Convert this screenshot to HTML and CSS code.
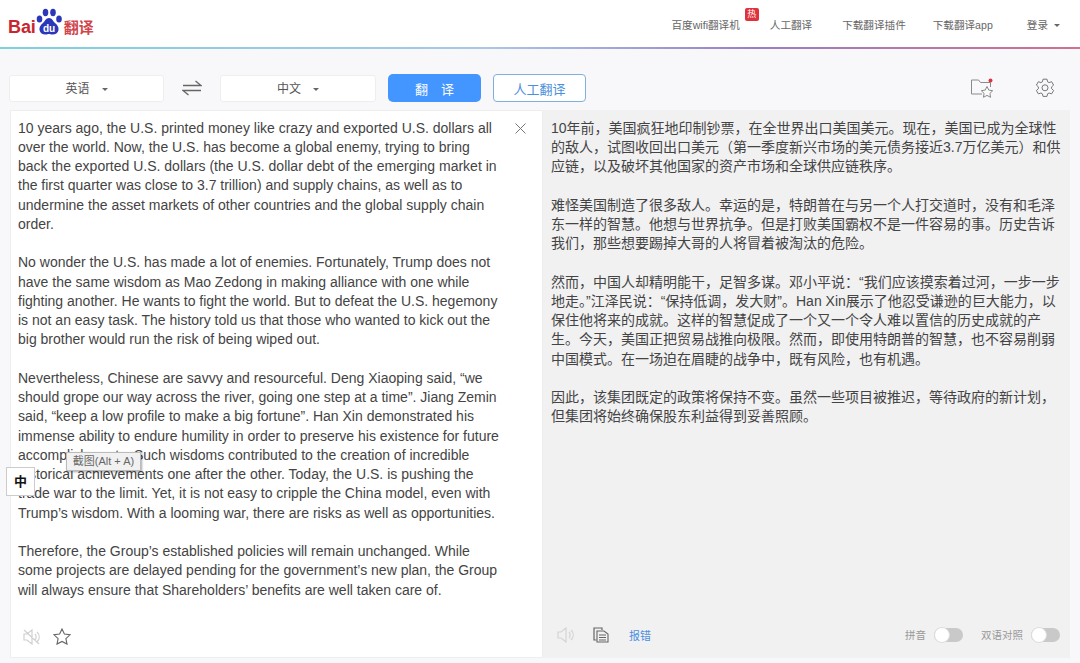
FILE: index.html
```html
<!DOCTYPE html>
<html lang="zh">
<head>
<meta charset="utf-8">
<title>百度翻译</title>
<link rel="stylesheet" href="styles.css">
</head>
<body>
<header class="topbar">
  <a class="logo">
    <span class="logo-bai">Bai</span>
    <svg class="paw" width="26" height="28" viewBox="0 0 26 28"><g fill="#2b37b8"><ellipse cx="3.5" cy="11" rx="2.8" ry="3.6"/><ellipse cx="9.5" cy="4.5" rx="2.8" ry="3.7"/><ellipse cx="17" cy="4.5" rx="2.8" ry="3.7"/><ellipse cx="23" cy="11" rx="2.8" ry="3.6"/><path d="M13 10c-3 0-4 3-6 5-2 1.500-4 4-3.500 7 .5 3 3 4.500 6 4.500 1.500 0 2.500-.5 3.500-.5s2 .5 3.500.5c3 0 5.500-1.500 6-4.500.5-3-1.500-5.500-3.500-7-2-2-3-5-6-5z"/></g><text x="13" y="23.500" class="paw-text" text-anchor="middle">du</text></svg>
    <span class="logo-cn">翻译</span>
  </a>
  <nav class="nav">
    <a class="nav-item nav-hot">百度wifi翻译机<span class="hot">热</span></a>
    <a class="nav-item">人工翻译</a>
    <a class="nav-item">下载翻译插件</a>
    <a class="nav-item">下载翻译app</a>
    <a class="nav-item nav-login">登录<i class="caret"></i></a>
  </nav>
</header>
<div class="rule"></div>
<section class="toolbar">
  <div class="select select-from">英语<i class="caret"></i></div>
  <svg class="swap" width="20" height="16" viewBox="0 0 20 16"><path d="M1 5.500h18L13.500 1M19 10.500H1L6.500 15" fill="none" stroke="#666" stroke-width="1.300"/></svg>
  <div class="select select-to">中文<i class="caret"></i></div>
  <button class="btn-primary">翻　译</button>
  <button class="btn-outline">人工翻译</button>
  <div class="tools">
    <span class="fav">
      <svg width="24" height="20" viewBox="0 0 24 20"><path d="M12 16H1.500V2h7l2 2.500h10V9" fill="none" stroke="#8a8a8a" stroke-width="1"/><path d="M17 8.500l1.800 3.600 3.900.6-2.800 2.700.7 3.900-3.600-1.900-3.600 1.900.7-3.900-2.800-2.700 3.900-.6z" fill="#fafafa" stroke="#8a8a8a" stroke-width="1"/><circle cx="20.500" cy="2.500" r="2" fill="#d9363e"/></svg>
    </span>
    <svg class="gear" width="20" height="20" viewBox="0 0 20 20"><path d="M8 1.200h4l.6 2.600 1.500.8 2.500-.9 2 3.400-2 1.800v1.800l2 1.800-2 3.400-2.500-.9-1.500.8-.6 2.600H8l-.6-2.600-1.500-.8-2.500.9-2-3.400 2-1.800V8.900l-2-1.800 2-3.400 2.500.9 1.500-.8z" fill="none" stroke="#777" stroke-width="1"/><circle cx="10" cy="9.800" r="3" fill="none" stroke="#777" stroke-width="1"/></svg>
  </div>
</section>
<main class="panels">
  <section class="panel panel-src">
    <svg class="close" width="11" height="11" viewBox="0 0 11 11"><path d="M.5.500l10 10M10.500.500l-10 10" stroke="#777" stroke-width="1"/></svg>
    <div class="src-text">
      <p>10 years ago, the U.S. printed money like crazy and exported U.S. dollars all<br>over the world. Now, the U.S. has become a global enemy, trying to bring<br>back the exported U.S. dollars (the U.S. dollar debt of the emerging market in<br>the first quarter was close to 3.7 trillion) and supply chains, as well as to<br>undermine the asset markets of other countries and the global supply chain<br>order.</p>
      <p>No wonder the U.S. has made a lot of enemies. Fortunately, Trump does not<br>have the same wisdom as Mao Zedong in making alliance with one while<br>fighting another. He wants to fight the world. But to defeat the U.S. hegemony<br>is not an easy task. The history told us that those who wanted to kick out the<br>big brother would run the risk of being wiped out.</p>
      <p>Nevertheless, Chinese are savvy and resourceful. Deng Xiaoping said, “we<br>should grope our way across the river, going one step at a time”. Jiang Zemin<br>said, “keep a low profile to make a big fortune”. Han Xin demonstrated his<br>immense ability to endure humility in order to preserve his existence for future<br>accomplishments. Such wisdoms contributed to the creation of incredible<br>historical achievements one after the other. Today, the U.S. is pushing the<br>trade war to the limit. Yet, it is not easy to cripple the China model, even with<br>Trump’s wisdom. With a looming war, there are risks as well as opportunities.</p>
      <p>Therefore, the Group’s established policies will remain unchanged. While<br>some projects are delayed pending for the government’s new plan, the Group<br>will always ensure that Shareholders’ benefits are well taken care of.</p>
    </div>
    <div class="panel-foot">
      <svg width="18" height="16" viewBox="0 0 18 16"><path d="M1 5h3l5-4v14l-5-4H1zM12 5c1.500 1.500 1.500 4.500 0 6M14 3c3 3 3 7 0 10M1 1l15 14" fill="none" stroke="#d0d0d0" stroke-width="1.200"/></svg>
      <svg class="star" width="18" height="17" viewBox="0 0 18 17"><path d="M9 1l2.400 5.100 5.600.7-4.100 3.800 1.100 5.500L9 13.400l-5 2.700 1.100-5.500L1 6.800l5.600-.7z" fill="none" stroke="#666" stroke-width="1.100"/></svg>
    </div>
  </section>
  <section class="panel panel-dst">
    <div class="dst-text">
      <p>10年前，美国疯狂地印制钞票，在全世界出口美国美元。现在，美国已成为全球性<br>的敌人，试图收回出口美元（第一季度新兴市场的美元债务接近3.7万亿美元）和供<br>应链，以及破坏其他国家的资产市场和全球供应链秩序。</p>
      <p>难怪美国制造了很多敌人。幸运的是，特朗普在与另一个人打交道时，没有和毛泽<br>东一样的智慧。他想与世界抗争。但是打败美国霸权不是一件容易的事。历史告诉<br>我们，那些想要踢掉大哥的人将冒着被淘汰的危险。</p>
      <p>然而，中国人却精明能干，足智多谋。邓小平说：“我们应该摸索着过河，一步一步<br>地走。”江泽民说：“保持低调，发大财”。Han Xin展示了他忍受谦逊的巨大能力，以<br>保住他将来的成就。这样的智慧促成了一个又一个令人难以置信的历史成就的产<br>生。今天，美国正把贸易战推向极限。然而，即使用特朗普的智慧，也不容易削弱<br>中国模式。在一场迫在眉睫的战争中，既有风险，也有机遇。</p>
      <p>因此，该集团既定的政策将保持不变。虽然一些项目被推迟，等待政府的新计划，<br>但集团将始终确保股东利益得到妥善照顾。</p>
    </div>
    <div class="panel-foot dst-foot">
      <svg width="18" height="16" viewBox="0 0 18 16"><path d="M1 5h3l5-4v14l-5-4H1zM12 5c1.500 1.500 1.500 4.500 0 6M14 3c3 3 3 7 0 10" fill="none" stroke="#d4d4d4" stroke-width="1.200"/></svg>
      <svg class="copy" width="16" height="16" viewBox="0 0 16 16"><path d="M3.500 13H1V1h8v2" fill="none" stroke="#666" stroke-width="1.200"/><path d="M4 4h7l4 3v8H4zM6 8h7M6 10.500h7M6 13h7" fill="none" stroke="#666" stroke-width="1.100"/></svg>
      <a class="report">报错</a>
      <span class="toggle-group">
        <span class="toggle-label">拼音</span><span class="toggle"><i></i></span>
        <span class="toggle-label label-gap">双语对照</span><span class="toggle"><i></i></span>
      </span>
    </div>
  </section>
</main>
<div class="shot-tip">截图(Alt + A)</div>
<div class="ime">中</div>
</body>
</html>
```
FILE: styles.css
```css
* { box-sizing: border-box; }
html, body { margin: 0; padding: 0; }
body {
  width: 1080px;
  height: 663px;
  overflow: hidden;
  background: #f8f8fa;
  font-family: "Liberation Sans", "Noto Sans CJK SC", sans-serif;
  color: #333;
  position: relative;
}
p { margin: 0; }
.topbar {
  height: 47px;
  background: #fff;
  display: flex;
  justify-content: space-between;
  align-items: flex-start;
}
.logo {
  display: flex;
  align-items: flex-start;
  margin-left: 8px;
  padding-top: 8px;
}
.logo-bai {
  font-size: 18px;
  font-weight: 700;
  color: #c9252f;
  line-height: 19px;
  margin-top: 10px;
  letter-spacing: -0.1px;
}
.paw { margin-left: 0; }
.paw-text { font: 700 10px "Liberation Sans", sans-serif; fill: #fff; }
.logo-cn {
  font-size: 15px;
  font-weight: 700;
  color: #d0454c;
  line-height: 19px;
  margin: 10px 0 0 2px;
}
.nav {
  display: flex;
  font-size: 10.600px;
  color: #666;
  padding-top: 18px;
  line-height: 15px;
}
.nav-item { position: relative; white-space: nowrap; }
.nav-hot { margin-right: 30px; }
.nav-item:nth-child(2) { margin-right: 30px; }
.nav-item:nth-child(3) { margin-right: 27px; }
.nav-item:nth-child(4) { margin-right: 34px; }
.nav-login { margin-right: 20px; }
.hot {
  position: absolute;
  right: -19px;
  top: -10px;
  width: 14px;
  height: 13px;
  background: #e0323c;
  color: #fff;
  font-size: 9px;
  line-height: 13px;
  text-align: center;
  border-radius: 2px;
}
.caret {
  display: inline-block;
  width: 0;
  height: 0;
  margin-left: 6px;
  vertical-align: 2px;
  border: 3px solid transparent;
  border-top: 3.500px solid #666;
  border-bottom: 0;
}
.rule {
  height: 1.500px;
  background: linear-gradient(90deg, #7fd0de 0%, #a9c7e8 45%, #9a7fc4 70%, #d2708f 100%);
}
.toolbar {
  display: flex;
  align-items: center;
  height: 27px;
  margin: 26px 10px 0 9px;
}
.select {
  height: 27px;
  flex: none;
  background: #fff;
  border: 1px solid #eeeeef;
  border-radius: 3px;
  font-size: 12px;
  color: #555;
  line-height: 26px;
  text-align: center;
}
.select .caret { margin-left: 12px; }
.select-from { width: 155px; }
.swap { margin: 0 18px; flex: none; }
.select-to { width: 156px; }
.btn-primary {
  width: 93px;
  height: 28px;
  flex: none;
  margin-left: 12px;
  border: 0;
  border-radius: 5px;
  background: #4395ff;
  color: #fff;
  font: 13px "Liberation Sans", "Noto Sans CJK SC", sans-serif;
}
.btn-outline {
  width: 93px;
  height: 28px;
  flex: none;
  margin-left: 12px;
  border: 1px solid #7fb0dc;
  border-radius: 4px;
  background: #fff;
  color: #4b8fdc;
  font: 13px "Liberation Sans", "Noto Sans CJK SC", sans-serif;
}
.tools {
  margin-left: auto;
  display: flex;
  align-items: center;
  gap: 41px;
  padding-right: 15px;
}
.fav, .gear { display: block; }
.fav svg { display: block; }
.panels {
  display: flex;
  height: 548px;
  margin: 8px 10px 0;
}
.panel {
  position: relative;
  display: flex;
  flex-direction: column;
  justify-content: space-between;
}
.panel-src {
  width: 533px;
  background: #fff;
  border: 1px solid #eeeeef;
  padding: 8px 7px 0;
}
.panel-dst {
  width: 527px;
  background: #f1f1f2;
  padding: 9px 8px 0;
}
.close { position: absolute; right: 16px; top: 12px; }
.src-text {
  font-size: 14px;
  line-height: 19.250px;
  color: #444;
  white-space: nowrap;
}
.dst-text {
  font-size: 14px;
  line-height: 19.250px;
  color: #444;
  white-space: nowrap;
}
.src-text p, .dst-text p { margin-bottom: 19.250px; }
.panel-foot {
  display: flex;
  align-items: center;
  height: 44px;
  padding: 0 5px 2px;
  gap: 12px;
}
.dst-foot {
  padding: 0 0 2px 6px;
  gap: 18px;
}
.dst-foot .copy { margin-left: 0; }
.report { font-size: 11px; color: #4a8fe0; margin-left: 2px; }
.toggle-group {
  margin-left: auto;
  display: flex;
  align-items: center;
  font-size: 10.500px;
  color: #999;
  padding-right: 2px;
}
.toggle-label { margin-right: 8px; }
.label-gap { margin-left: 18px; }
.toggle {
  width: 29px;
  height: 14px;
  border-radius: 7px;
  background: #c9c9c9;
  display: block;
  position: relative;
}
.toggle i {
  position: absolute;
  left: 0;
  top: -1px;
  width: 16px;
  height: 16px;
  border-radius: 50%;
  background: #fff;
  border: 1px solid #ddd;
}
.shot-tip {
  position: absolute;
  left: 66px;
  top: 452px;
  width: 75px;
  height: 19px;
  background: #f1f1f1;
  border: 1px solid #bbb;
  box-shadow: 1px 1px 2px rgba(0,0,0,.35);
  font-size: 11px;
  line-height: 17px;
  color: #666;
  text-align: center;
  white-space: nowrap;
}
.ime {
  position: absolute;
  left: 6px;
  top: 467px;
  width: 29px;
  height: 29px;
  background: #fff;
  border: 1px solid #ccc;
  font-size: 13px;
  font-weight: 700;
  line-height: 27px;
  color: #111;
  text-align: center;
}
```
